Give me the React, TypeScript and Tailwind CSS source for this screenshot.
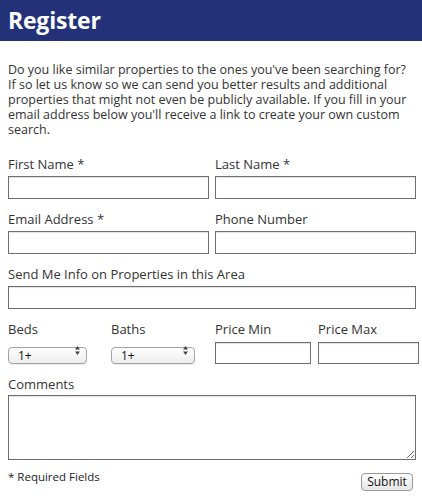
import { useState } from 'react'

const font = { fontFamily: '"Open Sans", "Liberation Sans", sans-serif' }

function Field({ label, className = '' }: { label: string; className?: string }) {
  return (
    <div className={`flex flex-col ${className}`}>
      <label className="text-[13px] leading-[15px] text-[#333]">{label}</label>
      <input
        type="text"
        className="mt-[4px] h-[23px] w-full border border-[#6e6e6e] bg-white shadow-[inset_0_1px_1px_rgba(0,0,0,0.12)] outline-none"
      />
    </div>
  )
}

function SelectBox({ label, width }: { label: string; width: string }) {
  const [value, setValue] = useState('1+')
  return (
    <div className="flex flex-col">
      <label className="text-[13px] leading-[15px] text-[#333]">{label}</label>
      <div className={`relative mt-[5px] ${width}`}>
        <select
          value={value}
          onChange={(e) => setValue(e.target.value)}
          className="h-[17px] w-full appearance-none rounded-[4px] border border-[#a3a3a3] bg-gradient-to-b from-white to-[#ececec] py-0 pl-[9px] text-[12px] leading-[15px] text-[#111] outline-none shadow-[0_1px_0_rgba(0,0,0,0.08)]"
        >
          <option>1+</option>
          <option>2+</option>
          <option>3+</option>
          <option>4+</option>
        </select>
        {/* up/down arrows */}
        <svg className="pointer-events-none absolute right-[7px] top-[4px]" width="5" height="9" viewBox="0 0 5 9">
          <path d="M2.5 0 L5 3.5 L0 3.5 Z" fill="#444" />
          <path d="M2.5 9 L5 5.5 L0 5.5 Z" fill="#444" />
        </svg>
      </div>
    </div>
  )
}

export default function App() {
  return (
    <div className="w-[422px] h-[500px] bg-white" style={font}>
      {/* header */}
      <div className="h-[41px] bg-[#233178] pl-[8px] flex items-center">
        <h1 className="text-[23px] font-bold leading-none text-white tracking-[-0.2px]">Register</h1>
      </div>

      <div className="pl-[8px] pr-[6px]">
        <p className="mt-[21px] pr-[2px] text-[12.5px] leading-[15px] text-[#333]">
          Do you like similar properties to the ones you've been searching for? If so let us know so we can send
          you better results and additional properties that might not even be publicly available. If you fill in your
          email address below you'll receive a link to create your own custom search.
        </p>

        <div className="mt-[20px] grid grid-cols-2 gap-x-[6px] gap-y-[13px]">
          <Field label="First Name *" />
          <Field label="Last Name *" />
          <Field label="Email Address *" />
          <Field label="Phone Number" />
          <Field label="Send Me Info on Properties in this Area" className="col-span-2" />
        </div>

        <div className="mt-[13px] grid grid-cols-[103px_104px_103px_1fr]">
          <SelectBox label="Beds" width="w-[79px]" />
          <SelectBox label="Baths" width="w-[84px]" />
          <div className="flex flex-col">
            <label className="text-[13px] leading-[15px] text-[#333]">Price Min</label>
            <input
              type="text"
              className="mt-[5px] h-[22px] w-[96px] border border-[#6e6e6e] bg-white shadow-[inset_0_1px_1px_rgba(0,0,0,0.12)] outline-none"
            />
          </div>
          <div className="flex flex-col">
            <label className="text-[13px] leading-[15px] text-[#333]">Price Max</label>
            <input
              type="text"
              className="mt-[5px] h-[22px] w-[101px] border border-[#6e6e6e] bg-white shadow-[inset_0_1px_1px_rgba(0,0,0,0.12)] outline-none"
            />
          </div>
        </div>

        <div className="mt-[11px] flex flex-col">
          <label className="text-[13px] leading-[15px] text-[#333]">Comments</label>
          <textarea className="mt-[3px] h-[65px] w-full border border-[#6e6e6e] bg-white shadow-[inset_0_1px_1px_rgba(0,0,0,0.12)] outline-none" />
        </div>

        <div className="mt-[8px] flex items-start justify-between">
          <span className="mt-[2px] text-[11.5px] leading-[14px] text-[#222]">* Required Fields</span>
          <button className="mt-[5px] mr-[3px] h-[18px] w-[52px] rounded-[4px] border border-[#9a9a9a] bg-gradient-to-b from-white to-[#e6e6e6] text-[12px] leading-[14px] text-[#111]">
            Submit
          </button>
        </div>
      </div>
    </div>
  )
}
